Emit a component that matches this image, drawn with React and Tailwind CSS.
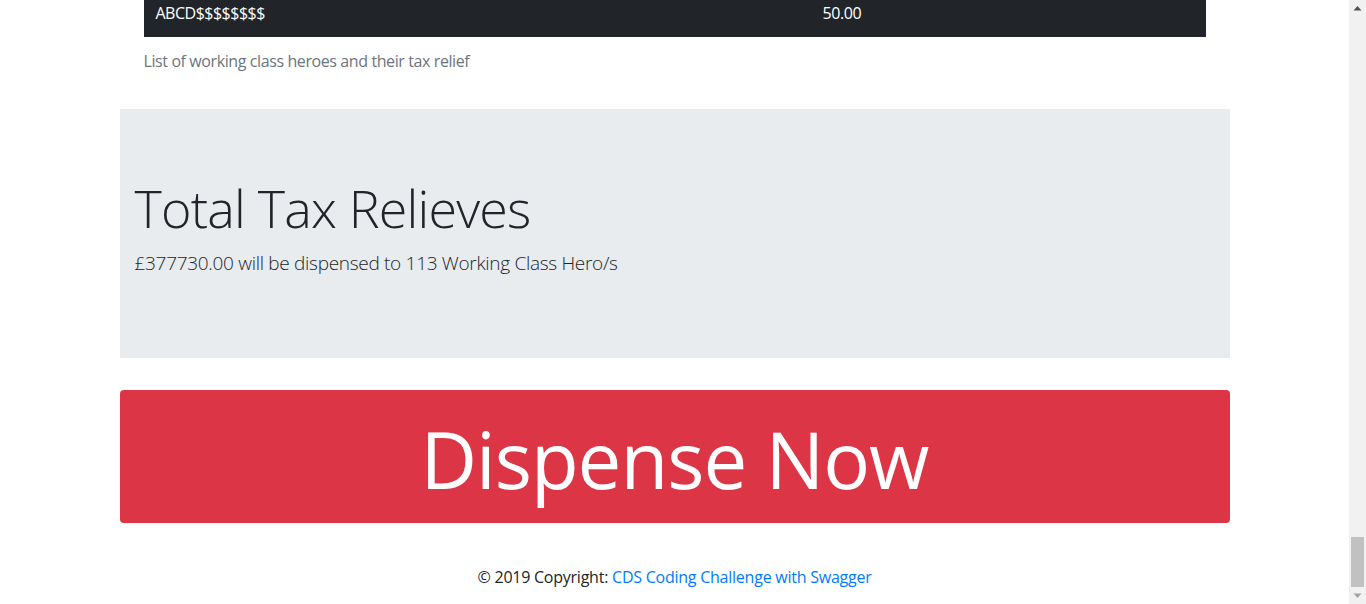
import React from 'react';

const font = { fontFamily: '"Open Sans", "Liberation Sans", sans-serif' };

const ScrollBar = () => (
  <div className="w-[17px] shrink-0 bg-[#f1f1f1] flex flex-col items-center justify-between">
    {/* up arrow */}
    <svg width="17" height="17" viewBox="0 0 17 17" className="shrink-0">
      <path d="M4.5 10.5 L8.5 6 L12.5 10.5 Z" fill="#505050" />
    </svg>
    <div className="flex-1" />
    <div className="w-[13px] h-[50px] bg-[#c1c1c1]" />
    <svg width="17" height="17" viewBox="0 0 17 17" className="shrink-0">
      <path d="M4.5 6.5 L8.5 11 L12.5 6.5 Z" fill="#a3a3a3" />
    </svg>
  </div>
);

export default function App() {
  return (
    <div className="flex w-[1366px] h-[604px] overflow-hidden bg-white text-[#212529]" style={font}>
      <div className="flex-1 flex flex-col">
        <div className="w-[1110px] mx-auto flex flex-col">
          {/* tail of the heroes table */}
          <div className="px-6">
            <table className="w-full text-base border-collapse">
              <tbody>
                <tr className="bg-[#212529] text-white">
                  <td className="w-[667px] pl-3 pt-px pb-3 leading-6 tracking-[-0.5px]">ABCD$$$$$$$$</td>
                  <td className="pl-3 pt-px pb-3 leading-6 tracking-[-0.4px]">50.00</td>
                </tr>
              </tbody>
            </table>
            <p className="pt-3 leading-6 text-[#6c757d] tracking-[-0.4px]">List of working class heroes and their tax relief</p>
          </div>

          {/* jumbotron */}
          <div className="mt-9 bg-[#e9ecef] py-16 px-[15px]">
            <h1 className="text-[52px] h-[67px] pt-[3px] flex items-center font-light tracking-[-0.8px] mb-2">Total Tax Relieves</h1>
            <p className="text-[19px] font-light leading-[30px] tracking-[-0.3px] mb-4">£377730.00 will be dispensed to 113 Working Class Hero/s</p>
          </div>

          {/* action */}
          <button className="mt-8 h-[133px] pt-[5px] w-full rounded-[4px] bg-[#dc3545] text-white text-[78px] tracking-[-1px] leading-[1.5]">
            Dispense Now
          </button>
        </div>

        <footer className="mt-[26px] py-4 text-center text-base leading-6 tracking-[-0.24px]">
          © 2019 Copyright: <a className="text-[#007bff]" href="#">CDS Coding Challenge with Swagger</a>
        </footer>
      </div>
      <ScrollBar />
    </div>
  );
}
